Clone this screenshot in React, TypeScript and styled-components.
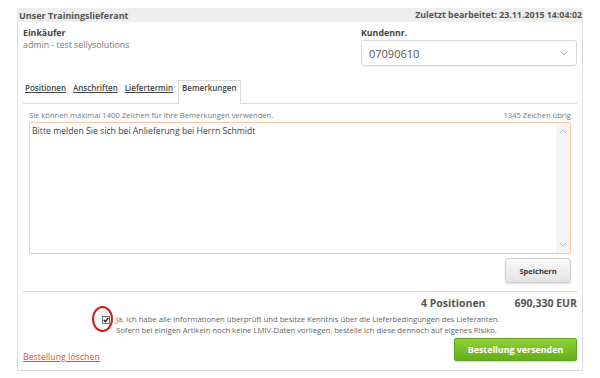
import React from "react";
import styled, { createGlobalStyle } from "styled-components";

const Global = createGlobalStyle`
  html, body { margin: 0; padding: 0; background: #fff; }
  body { font-family: "Open Sans", "Liberation Sans", Arial, sans-serif; color: #555; }
  * { box-sizing: border-box; }
`;

const Panel = styled.div`
  margin: 8px 0 0 17px;
  width: 566px;
  height: 363px;
  border: 1px solid #dedede;
  border-top: none;
  display: flex;
  flex-direction: column;
`;

const Header = styled.div`
  height: 14px;
  background: #eeeeee;
  display: flex;
  align-items: center;
  justify-content: space-between;
  padding: 0 1px 0 2px;
  margin: 0 -1px;
  color: #555;
`;

const HeaderTitle = styled.span<{ $size: number }>`
  font-size: ${(p) => p.$size}px;
  font-weight: 700;
`;

const Body = styled.div`
  flex: 1;
  padding: 0 5px;
  display: flex;
  flex-direction: column;
`;

const TopRow = styled.div`
  display: flex;
  justify-content: space-between;
  padding-top: 5px;
  height: 58px;
`;

const Field = styled.div<{ $w?: number }>`
  display: flex;
  flex-direction: column;
  width: ${(p) => (p.$w ? `${p.$w}px` : "auto")};
`;

const Label = styled.div`
  font-size: 8.8px;
  font-weight: 700;
  color: #444;
  line-height: 12px;
`;

const Value = styled.div`
  font-size: 8.8px;
  color: #777;
  line-height: 13px;
`;

const Select = styled.div`
  margin-top: 1px;
  height: 26px;
  border: 1px solid #d9d9d9;
  border-radius: 3px;
  display: flex;
  align-items: center;
  justify-content: space-between;
  padding: 0 8px 0 7px;
  font-size: 11px;
  color: #555;
  box-shadow: 0 1px 1px rgba(0, 0, 0, 0.05);
`;

const Tabs = styled.div`
  display: flex;
  align-items: stretch;
  height: 24px;
  border-bottom: 1px solid #dcdcdc;
  padding-left: 2px;
  gap: 7px;
`;

const Tab = styled.div<{ $active?: boolean }>`
  font-size: 8px;
  font-weight: 600;
  color: #444;
  line-height: 11px;
  background: #fff;
  border: ${(p) => (p.$active ? "1px solid #dcdcdc" : "none")};
  border-bottom: none;
  padding: ${(p) => (p.$active ? "1px 3px 0" : "2px 0 0")};
  margin-bottom: ${(p) => (p.$active ? "-1px" : "0")};
  margin-left: ${(p) => (p.$active ? "-2px" : "0")};
  text-decoration: ${(p) => (p.$active ? "none" : "underline")};
`;

const CommentArea = styled.div`
  padding: 6px 6px 0;
  display: flex;
  flex-direction: column;
`;

const InfoRow = styled.div`
  display: flex;
  justify-content: space-between;
  font-size: 7.6px;
  color: #777;
  line-height: 11px;
`;

const TextBox = styled.div`
  margin-top: 1px;
  height: 132px;
  border: 1px solid #f6c9ae;
  border-radius: 2px;
  display: flex;
`;

const TextContent = styled.div`
  flex: 1;
  font-size: 8.7px;
  color: #444;
  padding: 2px 2px;
  line-height: 12px;
`;

const Scrollbar = styled.div`
  width: 14px;
  background: #f5f5f5;
  display: flex;
  flex-direction: column;
  justify-content: space-between;
  align-items: center;
  padding: 6px 0 6px;
`;

const SaveRow = styled.div`
  display: flex;
  justify-content: flex-end;
  padding-top: 4px;
  height: 37px;
`;

const SaveButton = styled.div`
  width: 66px;
  height: 25px;
  border: 1px solid #cfcfcf;
  border-radius: 3px;
  background: linear-gradient(#fafafa, #e3e3e3);
  box-shadow: 0 1px 2px rgba(0, 0, 0, 0.15);
  display: flex;
  align-items: center;
  justify-content: center;
  font-size: 7.5px;
  font-weight: 700;
  color: #333;
`;

const Divider = styled.div`
  border-top: 1px solid #dcdcdc;
`;

const TotalsRow = styled.div`
  display: flex;
  justify-content: flex-end;
  align-items: center;
  height: 22px;
  gap: 29px;
  font-size: 10.5px;
  font-weight: 700;
  color: #555;
`;

const ConfirmRow = styled.div`
  display: flex;
  align-items: flex-start;
  padding-left: 79px;
  gap: 7px;
`;

const CheckWrap = styled.div`
  position: relative;
  width: 8px;
  height: 8px;
  margin-top: 2px;
`;

const CheckBox = styled.div`
  width: 8px;
  height: 8px;
  border: 1px solid #777;
  background: #f3f3f3;
  display: flex;
  align-items: center;
  justify-content: center;
`;

const RedCircle = styled.div`
  position: absolute;
  left: -10px;
  top: -10px;
  width: 21px;
  height: 26px;
  border: 2px solid #d51c1c;
  border-radius: 50%;
`;

const ConfirmText = styled.div`
  font-size: 7.7px;
  color: #666;
  line-height: 10.5px;
  margin-left: -1px;
`;

const BottomRow = styled.div`
  display: flex;
  justify-content: space-between;
  align-items: flex-end;
  margin-top: 3px;
`;

const DeleteLink = styled.a`
  font-size: 8.8px;
  line-height: 12px;
  margin-bottom: -2px;
  color: #f0493e;
  text-decoration: underline;
`;

const SendButton = styled.div`
  width: 123px;
  height: 23px;
  border-radius: 2px;
  background: linear-gradient(#8fd13a, #66ac1c);
  border: 1px solid #62a51a;
  box-shadow: 0 1px 2px rgba(0, 0, 0, 0.2);
  display: flex;
  align-items: center;
  justify-content: center;
  font-size: 8.9px;
  font-weight: 700;
  color: #fff;
`;

const Chevron = ({ up }: { up?: boolean }) => (
  <svg width="8" height="5" viewBox="0 0 8 5">
    <path
      d={up ? "M0.5 4.5 L4 1 L7.5 4.5" : "M0.5 0.5 L4 4 L7.5 0.5"}
      fill="none"
      stroke="#b5b5b5"
      strokeWidth="1"
    />
  </svg>
);

export default function App() {
  return (
    <>
      <Global />
      <Panel>
        <Header>
          <HeaderTitle $size={9}>Unser Trainingslieferant</HeaderTitle>
          <HeaderTitle $size={8.8}>Zuletzt bearbeitet: 23.11.2015 14:04:02</HeaderTitle>
        </Header>
        <Body>
          <TopRow>
            <Field>
              <Label>Einkäufer</Label>
              <Value>admin - test sellysolutions</Value>
            </Field>
            <Field $w={216}>
              <Label>Kundennr.</Label>
              <Select>
                <span>07090610</span>
                <Chevron />
              </Select>
            </Field>
          </TopRow>
          <Tabs>
            <Tab>Positionen</Tab>
            <Tab>Anschriften</Tab>
            <Tab>Liefertermin</Tab>
            <Tab $active>Bemerkungen</Tab>
          </Tabs>
          <CommentArea>
            <InfoRow>
              <span>Sie können maximal 1400 Zeichen für Ihre Bemerkungen verwenden.</span>
              <span>1345 Zeichen übrig</span>
            </InfoRow>
            <TextBox>
              <TextContent>Bitte melden Sie sich bei Anlieferung bei Herrn Schmidt</TextContent>
              <Scrollbar>
                <Chevron up />
                <Chevron />
              </Scrollbar>
            </TextBox>
            <SaveRow>
              <SaveButton>Speichern</SaveButton>
            </SaveRow>
          </CommentArea>
          <Divider />
          <TotalsRow>
            <span>4 Positionen</span>
            <span>690,330 EUR</span>
          </TotalsRow>
          <ConfirmRow>
            <CheckWrap>
              <CheckBox>
                <svg width="6" height="6" viewBox="0 0 6 6">
                  <path d="M0.8 3 L2.4 4.6 L5.4 0.8" fill="none" stroke="#111" strokeWidth="1.3" />
                </svg>
              </CheckBox>
              <RedCircle />
            </CheckWrap>
            <ConfirmText>
              Ja, ich habe alle Informationen überprüft und besitze Kenntnis über die Lieferbedingungen des Lieferanten.
              <br />
              Sofern bei einigen Artikeln noch keine LMIV-Daten vorliegen, bestelle ich diese dennoch auf eigenes Risiko.
            </ConfirmText>
          </ConfirmRow>
          <BottomRow>
            <DeleteLink>Bestellung löschen</DeleteLink>
            <SendButton>Bestellung versenden</SendButton>
          </BottomRow>
        </Body>
      </Panel>
    </>
  );
}
